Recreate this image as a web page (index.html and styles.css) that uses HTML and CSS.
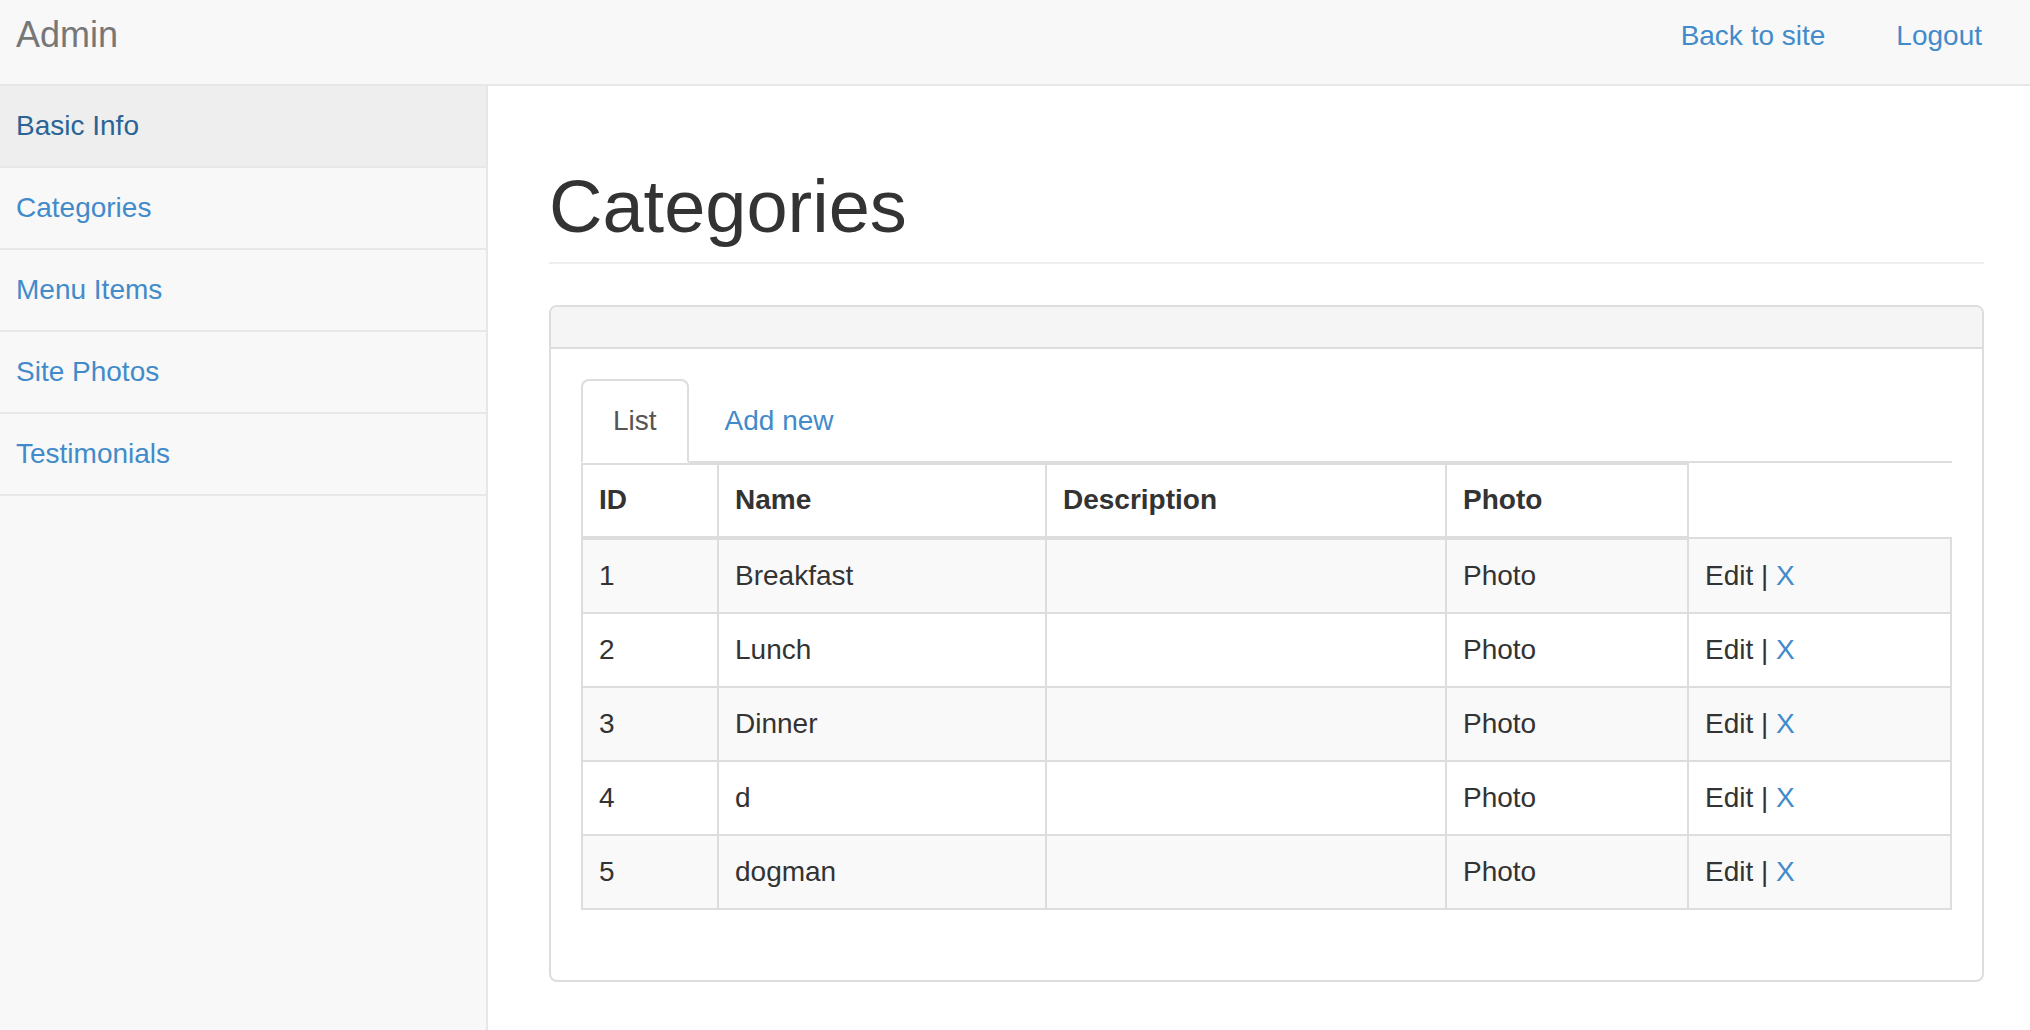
FILE: index.html
```html
<!DOCTYPE html>
<html lang="en">
<head>
<meta charset="utf-8">
<title>Admin - Categories</title>
<link rel="stylesheet" href="styles.css">
</head>
<body>
<header class="navbar">
  <a class="brand" href="#">Admin</a>
  <nav class="nav-right">
    <a href="#">Back to site</a>
    <a href="#">Logout</a>
  </nav>
</header>
<div class="layout">
  <aside class="sidebar">
    <a class="side-item active" href="#">Basic Info</a>
    <a class="side-item" href="#">Categories</a>
    <a class="side-item" href="#">Menu Items</a>
    <a class="side-item" href="#">Site Photos</a>
    <a class="side-item" href="#">Testimonials</a>
  </aside>
  <main class="main">
    <h1 class="page-header">Categories</h1>
    <div class="panel">
      <div class="panel-heading"></div>
      <div class="panel-body">
        <ul class="tabs">
          <li class="tab active"><a href="#">List</a></li>
          <li class="tab"><a href="#">Add new</a></li>
        </ul>
        <table class="data-table">
          <colgroup>
            <col class="c-id"><col class="c-name"><col class="c-desc"><col class="c-photo"><col class="c-act">
          </colgroup>
          <thead>
            <tr><th>ID</th><th>Name</th><th>Description</th><th>Photo</th><th class="blank"></th></tr>
          </thead>
          <tbody>
            <tr class="odd"><td>1</td><td>Breakfast</td><td></td><td>Photo</td><td>Edit | <a href="#">X</a></td></tr>
            <tr><td>2</td><td>Lunch</td><td></td><td>Photo</td><td>Edit | <a href="#">X</a></td></tr>
            <tr class="odd"><td>3</td><td>Dinner</td><td></td><td>Photo</td><td>Edit | <a href="#">X</a></td></tr>
            <tr><td>4</td><td>d</td><td></td><td>Photo</td><td>Edit | <a href="#">X</a></td></tr>
            <tr class="odd"><td>5</td><td>dogman</td><td></td><td>Photo</td><td>Edit | <a href="#">X</a></td></tr>
          </tbody>
        </table>
      </div>
    </div>
  </main>
</div>
</body>
</html>
```

FILE: styles.css
```css
* { box-sizing: border-box; }
html, body { margin: 0; padding: 0; }
body {
  font-family: "Liberation Sans", Arial, Helvetica, sans-serif;
  font-size: 28px;
  line-height: 40px;
  color: #333;
  background: #fff;
}
a { color: #428bca; text-decoration: none; }

.navbar {
  height: 86px;
  background: #f8f8f8;
  border-bottom: 2px solid #e7e7e7;
  display: flex;
  justify-content: space-between;
  align-items: flex-start;
  padding: 15px 48px 0 16px;
}
.brand {
  font-size: 36px;
  line-height: 40px;
  color: #777;
}
.nav-right {
  display: flex;
  gap: 71px;
  padding-top: 1px;
}
.nav-right a { line-height: 40px; }

.layout {
  display: flex;
  min-height: calc(100vh - 86px);
}
.sidebar {
  width: 488px;
  flex: 0 0 488px;
  background: #f8f8f8;
  border-right: 2px solid #e7e7e7;
  display: flex;
  flex-direction: column;
}
.side-item {
  display: block;
  height: 82px;
  line-height: 80px;
  padding-left: 16px;
  border-bottom: 2px solid #e7e7e7;
}
.side-item.active {
  background: #eee;
  color: #2a6496;
}

.main {
  flex: 1;
  padding: 0 48px 0 61px;
}
.page-header {
  margin: 81px 0 41px;
  padding-bottom: 15px;
  border-bottom: 2px solid #eee;
  font-size: 74px;
  line-height: 80px;
  font-weight: 500;
  color: #333;
}

.panel {
  border: 2px solid #ddd;
  border-radius: 8px;
  background: #fff;
}
.panel-heading {
  height: 42px;
  background: #f5f5f5;
  border-bottom: 2px solid #ddd;
  border-radius: 6px 6px 0 0;
}
.panel-body {
  padding: 30px 30px 30px;
}

.tabs {
  list-style: none;
  margin: 0;
  padding: 0;
  display: flex;
  border-bottom: 2px solid #ddd;
}
.tab {
  margin-right: 4px;
  margin-bottom: -2px;
}
.tab a {
  display: block;
  padding: 20px 30px;
  line-height: 40px;
  border: 2px solid transparent;
  border-radius: 8px 8px 0 0;
}
.tab.active a {
  color: #555;
  background: #fff;
  border-color: #ddd;
  border-bottom-color: transparent;
}

.data-table {
  width: 100%;
  border-collapse: collapse;
  table-layout: fixed;
  margin-bottom: 40px;
}
.c-id { width: 136px; }
.c-name { width: 328px; }
.c-desc { width: 400px; }
.c-photo { width: 242px; }
.c-act { width: 263px; }
.data-table th,
.data-table td {
  border: 2px solid #ddd;
  padding: 16px 16px;
  line-height: 40px;
  text-align: left;
  vertical-align: middle;
}
.data-table th {
  font-weight: bold;
  padding-top: 15px;
  padding-bottom: 16px;
  border-bottom-width: 4px;
}
.data-table th.blank {
  border: none;
}
.data-table tr.odd td { background: #f9f9f9; }
```
